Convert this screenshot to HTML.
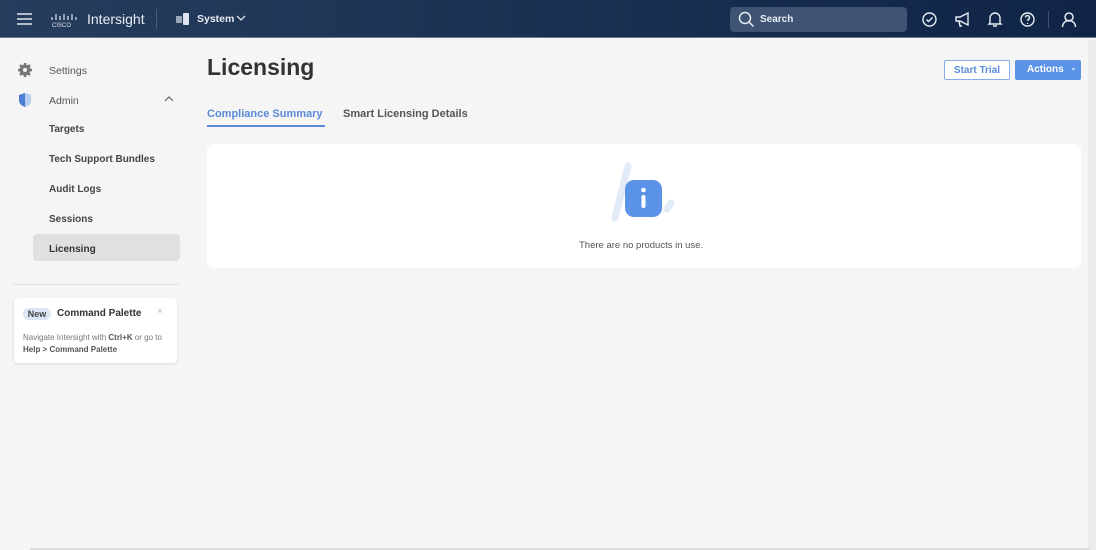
<!DOCTYPE html>
<html><head><style>
*{margin:0;padding:0;box-sizing:border-box}
body{width:1096px;height:550px;overflow:hidden;background:#f5f5f6;font-family:"Liberation Sans",sans-serif;position:relative;color:#333}
.hdr{position:absolute;left:0;top:0;width:1096px;height:38px;background:linear-gradient(90deg,#263d5e,#0f2446);border-bottom:1px solid #6a7a90}
.a{position:absolute}
.side{font-size:10px;color:#444;font-weight:bold}
</style></head><body>
<div class="hdr">
 <svg class="a" style="left:17px;top:13px" width="16" height="12"><path d="M0 1h15M0 6h15M0 11h15" stroke="#dfe5ee" stroke-width="1.6"/></svg>
 <svg class="a" style="left:50px;top:12px" width="28" height="16"><g stroke="#dfe5ee" stroke-width="1.2"><path d="M2 5v3M6 2v6M10 4v4M14 2v6M18 4v4M22 2v6M26 5v3"/></g><text x="2" y="15" font-size="6" fill="#dfe5ee" font-family="Liberation Sans">CISCO</text></svg>
 <div class="a" style="left:87px;top:11px;font-size:14px;color:#e8edf4">Intersight</div>
 <div class="a" style="left:156px;top:9px;width:1px;height:20px;background:#4a5e7a"></div>
 <svg class="a" style="left:176px;top:13px" width="16" height="13"><rect x="0" y="3" width="6" height="7" fill="#9aa7b8"/><rect x="7" y="0" width="6" height="12" rx="1" fill="#dfe5ee"/></svg>
 <div class="a" style="left:197px;top:13px;font-size:10.5px;font-weight:bold;color:#e8edf4">System</div>
 <svg class="a" style="left:235px;top:15px" width="12" height="7"><path d="M2 1l4 4 4-4" stroke="#dfe5ee" fill="none" stroke-width="1.3"/></svg>
 <div class="a" style="left:730px;top:7px;width:177px;height:25px;background:#3f5373;border-radius:4px"></div>
 <svg class="a" style="left:738px;top:11px" width="17" height="17"><circle cx="7" cy="7" r="5.5" stroke="#e8edf4" fill="none" stroke-width="1.5"/><path d="M11 11l4.5 4.5" stroke="#e8edf4" stroke-width="1.5"/></svg>
 <div class="a" style="left:760px;top:14px;font-size:10px;font-weight:bold;color:#e8edf4">Search</div>
 <svg class="a" style="left:921px;top:11px" width="17" height="17" fill="none" stroke="#e8edf4" stroke-width="1.4"><circle cx="8.5" cy="8.5" r="6.5"/><path d="M5.5 8.5l2 2 4-4"/></svg>
 <svg class="a" style="left:954px;top:11px" width="17" height="17" fill="none" stroke="#e8edf4" stroke-width="1.4"><path d="M2 6h4l8-4v12l-8-4H2zM5 10l1 5h2"/></svg>
 <svg class="a" style="left:987px;top:11px" width="16" height="17" fill="none" stroke="#e8edf4" stroke-width="1.4"><path d="M3 12V7a5 5 0 0 1 10 0v5l1 1H2zM6 15h4"/></svg>
 <svg class="a" style="left:1019px;top:11px" width="17" height="17" fill="none" stroke="#e8edf4" stroke-width="1.4"><circle cx="8.5" cy="8.5" r="6.5"/><path d="M6.5 6.5a2 2 0 1 1 2.5 2v1.5M8.5 12v1"/></svg>
 <div class="a" style="left:1048px;top:11px;width:1px;height:17px;background:#3e5372"></div>
 <svg class="a" style="left:1061px;top:11px" width="16" height="17" fill="none" stroke="#e8edf4" stroke-width="1.5"><circle cx="8" cy="6" r="4"/><path d="M1.5 16a6.5 6.5 0 0 1 13 0"/></svg>
</div>
<svg class="a" style="left:18px;top:63px" width="14" height="14"><circle cx="7" cy="7" r="5.5" fill="#777"/><g stroke="#777" stroke-width="2.5"><path d="M7 0v14M0 7h14M2 2l10 10M12 2L2 12"/></g><circle cx="7" cy="7" r="2" fill="#f5f5f6"/></svg>
<div class="a side" style="left:49px;top:65px;font-weight:normal;color:#555;font-size:10.5px">Settings</div>
<svg class="a" style="left:19px;top:93px" width="12" height="14"><path d="M6 0L0 2v5c0 4 3 6 6 7 3-1 6-3 6-7V2z" fill="#4a7fd4"/><path d="M6 0v14c3-1 6-3 6-7V2z" fill="#b9cdee"/></svg>
<div class="a side" style="left:49px;top:95px;font-weight:normal;color:#555;font-size:10.5px">Admin</div>
<svg class="a" style="left:164px;top:96px" width="10" height="7"><path d="M1 5l4-4 4 4" stroke="#666" fill="none" stroke-width="1.2"/></svg>
<div class="a side" style="left:49px;top:124px">Targets</div>
<div class="a side" style="left:49px;top:154px">Tech Support Bundles</div>
<div class="a side" style="left:49px;top:184px">Audit Logs</div>
<div class="a side" style="left:49px;top:214px">Sessions</div>
<div class="a" style="left:33px;top:234px;width:147px;height:27px;background:#e0e0e2;border-radius:4px"></div>
<div class="a side" style="left:49px;top:244px;color:#333">Licensing</div>
<div class="a" style="left:12px;top:284px;width:168px;height:1px;background:#e2e2e4"></div>
<div class="a" style="left:14px;top:298px;width:163px;height:65px;background:#fff;border-radius:4px;box-shadow:0 1px 3px rgba(0,0,0,.12)"></div>
<div class="a" style="left:23px;top:308px;width:28px;height:12px;border-radius:6px;background:#dbe6f7;font-size:9px;font-weight:bold;color:#444;text-align:center;line-height:12px">New</div>
<div class="a" style="left:57px;top:308px;font-size:10px;font-weight:bold;color:#333">Command Palette</div>
<div class="a" style="left:157px;top:306px;font-size:10px;color:#bbb">×</div>
<div class="a" style="left:23px;top:332px;font-size:8px;color:#777;line-height:12px;width:150px">Navigate Intersight with <b style="color:#555">Ctrl+K</b> or go to <b style="color:#555">Help &gt; Command Palette</b></div>
<div class="a" style="left:207px;top:54px;font-size:23px;font-weight:bold;color:#333">Licensing</div>
<div class="a" style="left:944px;top:60px;width:66px;height:20px;border:1px solid #85aee8;border-radius:2px;background:#fff;font-size:10px;font-weight:bold;color:#5a8bd8;text-align:center;line-height:19px">Start Trial</div>
<div class="a" style="left:1015px;top:60px;width:66px;height:20px;border-radius:2px;background:#5b93e8;font-size:10px;font-weight:bold;color:#fff;line-height:20px;padding-left:12px">Actions <span style="font-size:7px;margin-left:4px;position:relative;top:-2px">⌄</span></div>
<div class="a" style="left:207px;top:108px;font-size:11px;font-weight:bold;color:#5a8bd8">Compliance Summary</div>
<div class="a" style="left:207px;top:125px;width:118px;height:2px;background:#5a8bd8"></div>
<div class="a" style="left:343px;top:108px;font-size:11px;font-weight:bold;color:#555">Smart Licensing Details</div>
<div class="a" style="left:207px;top:144px;width:874px;height:124px;background:#fff;border-radius:7px"></div>
<svg class="a" style="left:606px;top:160px" width="72" height="66"><path d="M22 6L9 58" stroke="#e3ebf8" stroke-width="7" stroke-linecap="round"/><path d="M65 43l-4 6" stroke="#e3ebf8" stroke-width="7" stroke-linecap="round"/><rect x="19" y="20" width="37" height="37" rx="9" fill="#5b93e8"/><circle cx="37.5" cy="30" r="2.3" fill="#fff"/><rect x="35.5" y="35" width="4" height="13" rx="2" fill="#fff"/></svg>
<div class="a" style="left:579px;top:240px;font-size:9.5px;color:#555">There are no products in use.</div>
<div class="a" style="left:1088px;top:40px;width:8px;height:510px;background:#ececee"></div>
<div class="a" style="left:30px;top:548px;width:1060px;height:2px;background:#ddd"></div>
</body></html>
